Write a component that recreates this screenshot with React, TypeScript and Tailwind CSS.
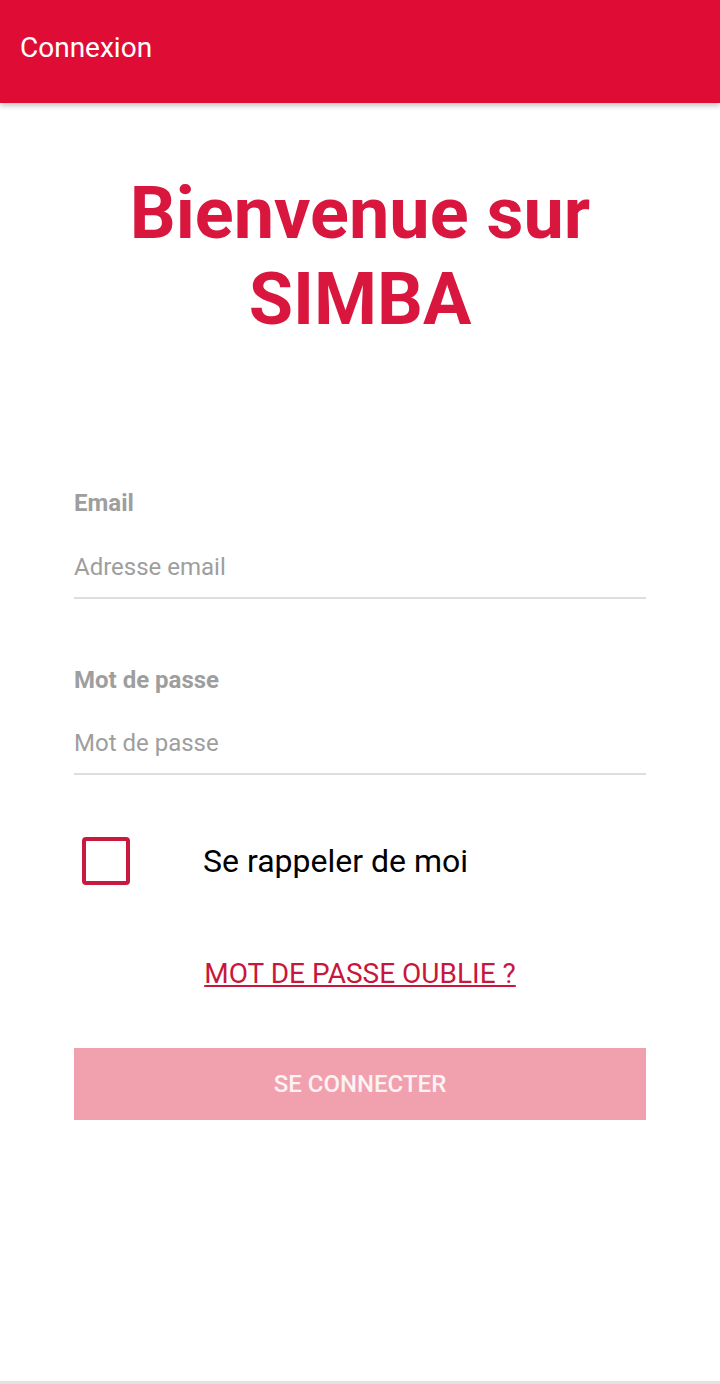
import React, { useState } from 'react';

const App: React.FC = () => {
    const [remember, setRemember] = useState(false);

    return (
        <div className="min-h-[1384px] bg-white flex flex-col font-['Roboto',sans-serif]">
            {/* Toolbar */}
            <header className="h-[103px] bg-[#df0d35] flex items-start px-5 pt-[30px] shadow-[0_3px_5px_rgba(0,0,0,0.22)] z-10">
                <h1 className="text-[28px] leading-[36px] text-white">Connexion</h1>
            </header>

            {/* Title */}
            <div className="pt-[68px] text-center">
                <h2 className="text-[72px] leading-[86px] font-bold text-[#d8163e]">
                    Bienvenue sur
                    <br />
                    SIMBA
                </h2>
            </div>

            {/* Form */}
            <div className="px-[74px] pt-[146px] flex flex-col">
                <label className="text-[24px] leading-[28px] font-bold text-[#9e9e9e]">Email</label>
                <input
                    type="email"
                    placeholder="Adresse email"
                    className="mt-[35px] pb-[15px] text-[24px] leading-[30px] text-[#212121] placeholder:text-[#9e9e9e] outline-none border-b-2 border-[#dedede]"
                />

                <label className="mt-[67px] text-[24px] leading-[28px] font-bold text-[#9e9e9e]">Mot de passe</label>
                <input
                    type="password"
                    placeholder="Mot de passe"
                    className="mt-[34px] pb-[15px] text-[24px] leading-[30px] text-[#212121] placeholder:text-[#9e9e9e] outline-none border-b-2 border-[#dedede]"
                />

                {/* Remember me */}
                <div className="mt-[62px] flex items-center">
                    <button
                        type="button"
                        onClick={() => setRemember(!remember)}
                        className="ml-[8px] w-[48px] h-[48px] border-[4px] border-[#c8193f] rounded-[4px] flex items-center justify-center"
                    >
                        {remember && <span className="text-[#c8193f] text-[28px] leading-none">✓</span>}
                    </button>
                    <span className="ml-[73px] text-[32px] leading-[36px] text-black">Se rappeler de moi</span>
                </div>

                {/* Forgot password */}
                <div className="mt-[73px] text-center">
                    <a href="#" className="text-[28px] leading-[32px] text-[#c8173c] underline">
                        MOT DE PASSE OUBLIE ?
                    </a>
                </div>

                {/* Submit */}
                <button
                    type="button"
                    className="mt-[58px] h-[72px] bg-[#f1a1ad] text-[24px] font-medium text-[#fdf2f4]"
                >
                    SE CONNECTER
                </button>
            </div>

            <div className="mt-auto h-[3px] bg-[#e2e2e2]" />
        </div>
    );
};

export default App;
